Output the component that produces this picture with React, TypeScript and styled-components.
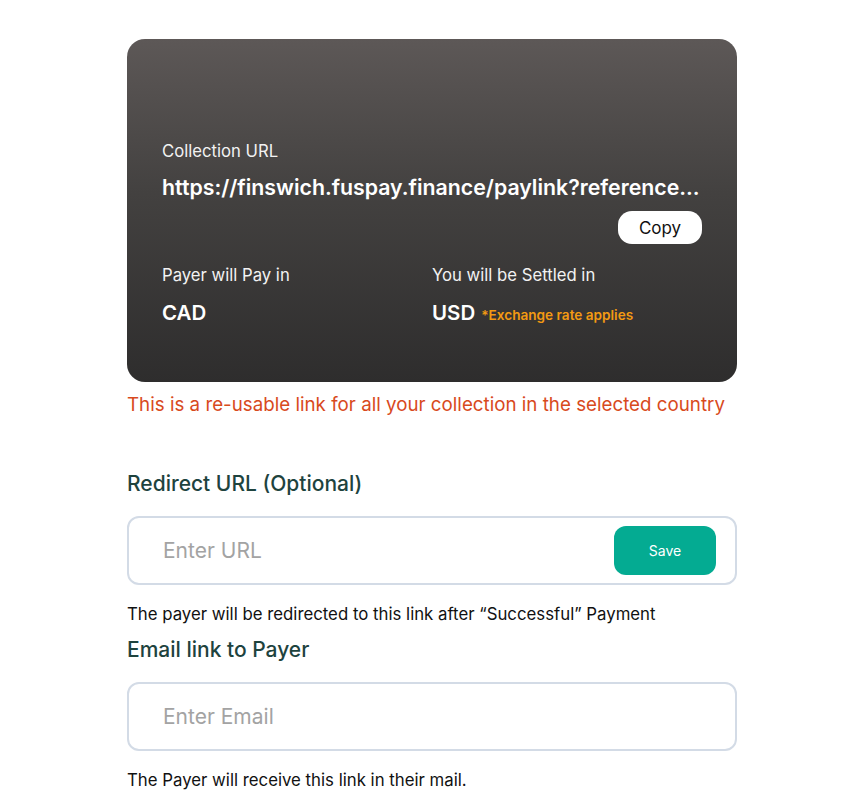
import React from "react";
import styled, { createGlobalStyle } from "styled-components";

const Global = createGlobalStyle`
  html, body { margin: 0; padding: 0; background: #ffffff; }
  body { font-family: Inter, "Noto Sans", sans-serif; -webkit-font-smoothing: antialiased; }
  * { box-sizing: border-box; }
`;

const Page = styled.div`
  width: 864px;
  min-height: 812px;
  padding: 39px 0 0 127px;
`;

const Column = styled.div`
  width: 610px;
  display: flex;
  flex-direction: column;
`;

const Card = styled.div`
  height: 343px;
  border-radius: 18px;
  background: linear-gradient(180deg, #5d5857 0%, #434140 45%, #2e2d2d 100%);
  padding: 100px 35px 0 35px;
  display: flex;
  flex-direction: column;
  color: #ffffff;
`;

const Label = styled.div`
  font-size: 16.7px;
  line-height: 24px;
  font-weight: 400;
  color: #f2f2f2;
`;

const UrlText = styled.div`
  margin-top: 11px;
  font-size: 21.3px;
  line-height: 26px;
  font-weight: 600;
  white-space: nowrap;
`;

const CopyRow = styled.div`
  display: flex;
  justify-content: flex-end;
  margin-top: 11px;
`;

const CopyButton = styled.button`
  width: 84px;
  height: 33px;
  border: none;
  border-radius: 14px;
  background: #ffffff;
  color: #111111;
  font-family: Inter, sans-serif;
  font-size: 17px;
  font-weight: 400;
  padding: 0;
`;

const Split = styled.div`
  margin-top: 19px;
  display: grid;
  grid-template-columns: 270px 1fr;
`;

const Currency = styled.div`
  margin-top: 13px;
  display: flex;
  align-items: baseline;
  gap: 6px;
`;

const Code = styled.span`
  font-size: 20.5px;
  line-height: 26px;
  font-weight: 600;
`;

const Note = styled.span`
  font-size: 13.6px;
  font-weight: 600;
  color: #f39a12;
`;

const Warning = styled.div`
  margin-top: 11px;
  font-size: 18.75px;
  line-height: 24px;
  color: #d84a1d;
`;

const Heading = styled.div<{ $top: number }>`
  margin-top: ${(p) => p.$top}px;
  font-size: 21px;
  line-height: 28px;
  font-weight: 500;
  color: #1e433e;
`;

const Field = styled.div<{ $top: number }>`
  margin-top: ${(p) => p.$top}px;
  height: 69px;
  border: 2px solid #d3dbe6;
  border-radius: 12px;
  display: flex;
  align-items: center;
  padding: 0 19px 0 32px;
`;

const Input = styled.input`
  flex: 1;
  border: none;
  outline: none;
  background: transparent;
  font-family: Inter, sans-serif;
  font-size: 21px;
  color: #222;
  &::placeholder { color: #a3a3a3; }
`;

const SaveButton = styled.button`
  width: 102px;
  height: 49px;
  border: none;
  border-radius: 12px;
  background: #04ab92;
  color: #ffffff;
  font-family: Inter, sans-serif;
  font-size: 14px;
  padding: 0;
`;

const Help = styled.div<{ $top: number }>`
  margin-top: ${(p) => p.$top}px;
  font-size: 16.8px;
  line-height: 24px;
  color: #111111;
`;

export default function App() {
  return (
    <>
      <Global />
      <Page>
        <Column>
          <Card>
            <Label>Collection URL</Label>
            <UrlText>https://finswich.fuspay.finance/paylink?reference...</UrlText>
            <CopyRow>
              <CopyButton>Copy</CopyButton>
            </CopyRow>
            <Split>
              <div>
                <Label>Payer will Pay in</Label>
                <Currency>
                  <Code>CAD</Code>
                </Currency>
              </div>
              <div>
                <Label>You will be Settled in</Label>
                <Currency>
                  <Code>USD</Code>
                  <Note>*Exchange rate applies</Note>
                </Currency>
              </div>
            </Split>
          </Card>
          <Warning>This is a re-usable link for all your collection in the selected country</Warning>
          <Heading $top={53}>Redirect URL (Optional)</Heading>
          <Field $top={18}>
            <Input placeholder="Enter URL" />
            <SaveButton>Save</SaveButton>
          </Field>
          <Help $top={17}>The payer will be redirected to this link after “Successful” Payment</Help>
          <Heading $top={10}>Email link to Payer</Heading>
          <Field $top={18}>
            <Input placeholder="Enter Email" />
          </Field>
          <Help $top={17}>The Payer will receive this link in their mail.</Help>
        </Column>
      </Page>
    </>
  );
}
